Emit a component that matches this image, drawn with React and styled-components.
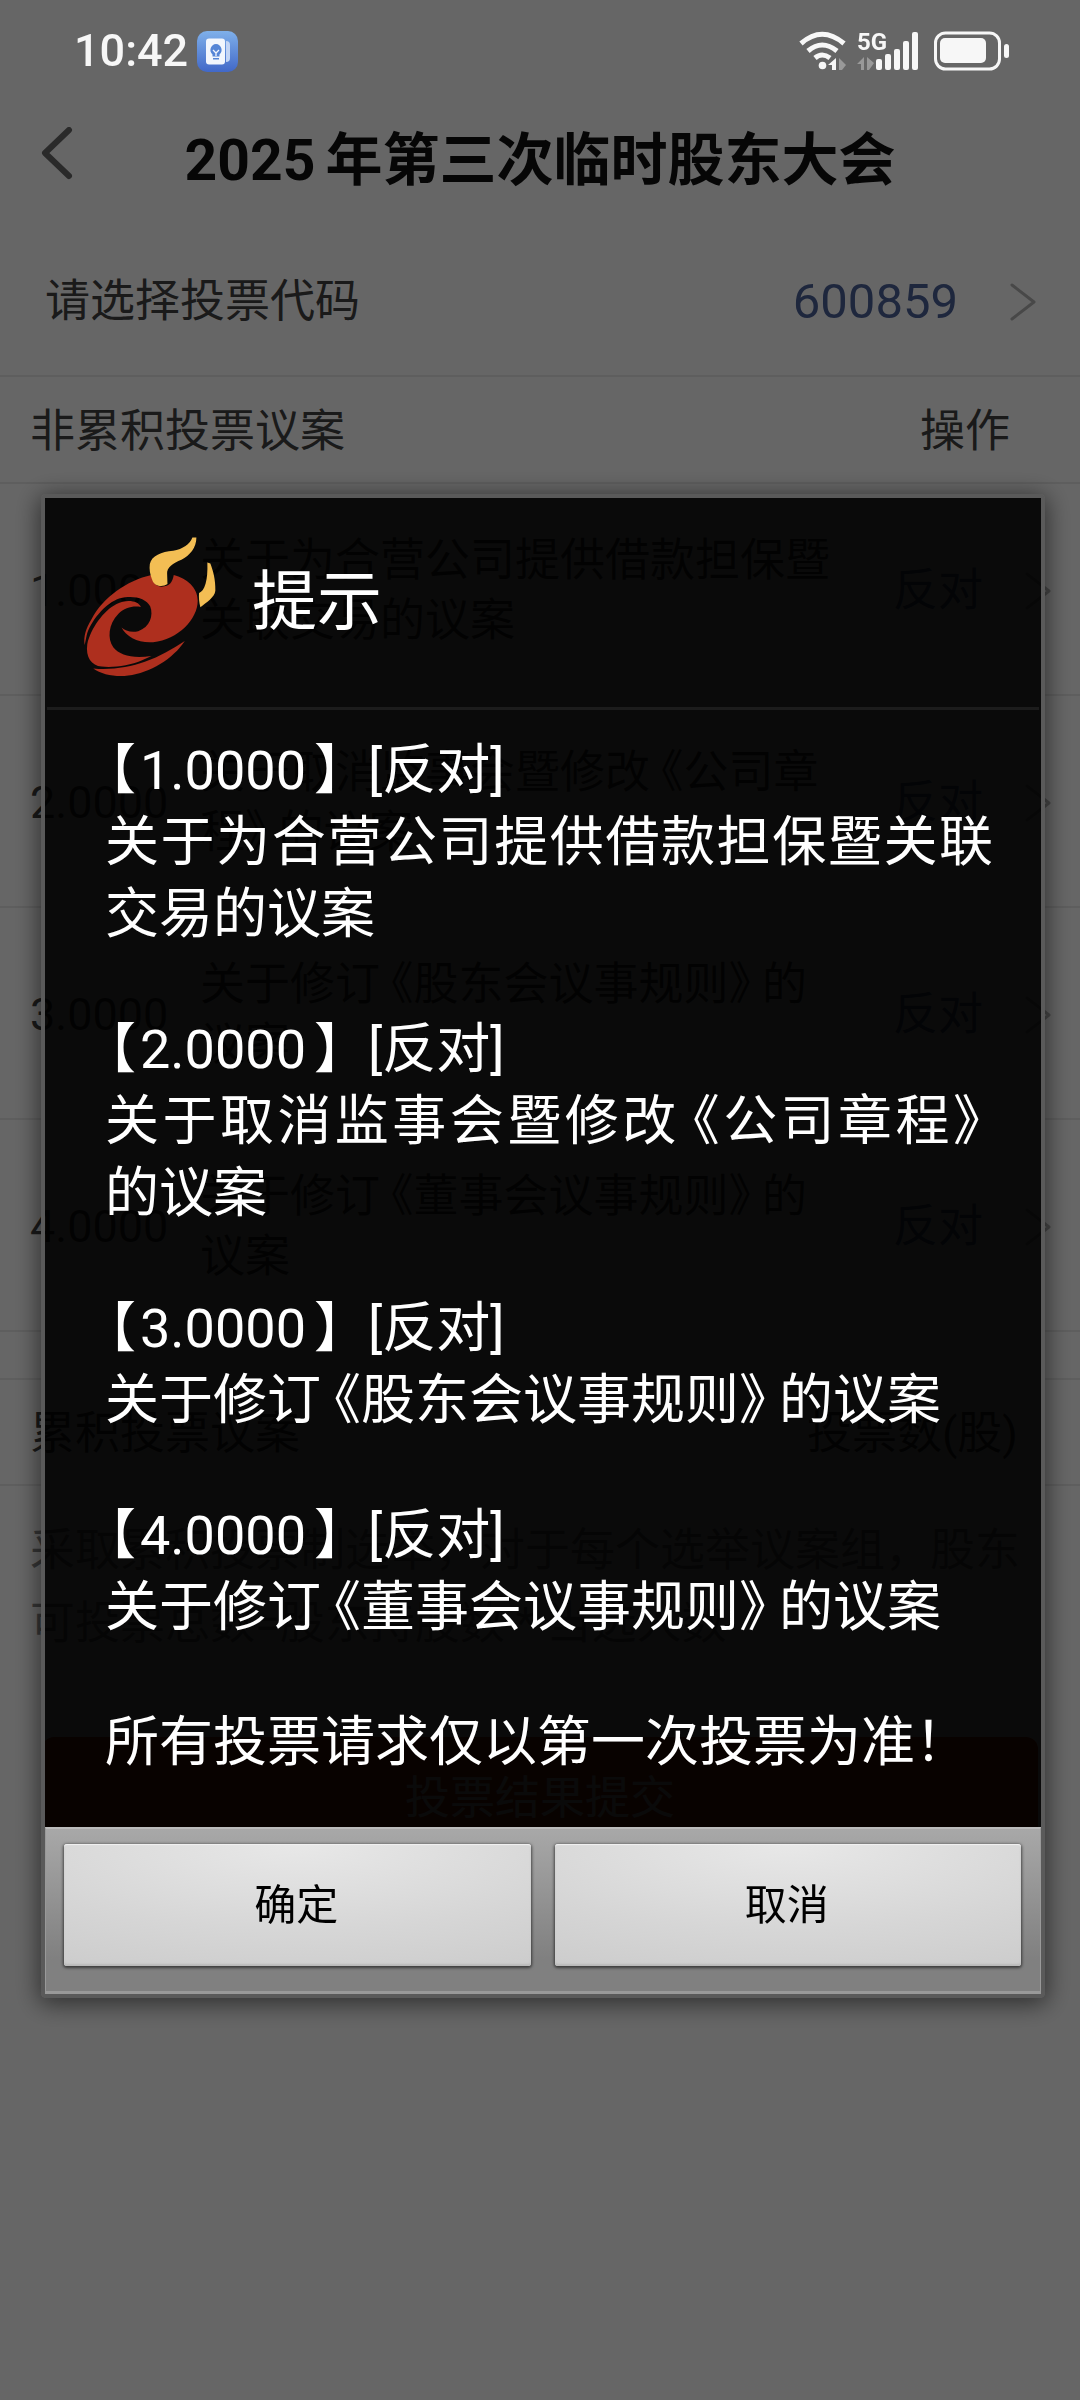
import React from 'react';
import styled, { createGlobalStyle } from 'styled-components';

const GlobalStyle = createGlobalStyle`
  * { box-sizing: border-box; }
  body {
    margin: 0;
    background: #fff;
    font-family: Roboto, "Noto Sans CJK SC", sans-serif;
    font-size: 45px;
    line-height: 60px;
    color: #424242;
  }
  button {
    font: inherit;
    color: inherit;
    border: 0;
    background: none;
    padding: 0;
  }
`;

const Screen = styled.div`
  min-height: 100vh;
  display: flex;
  flex-direction: column;
`;

const StatusBar = styled.header`
  position: relative;
  z-index: 2;
  height: 92px;
  padding: 10px 70px 0 74px;
  display: flex;
  align-items: center;
  justify-content: space-between;
  color: #f7f7f7;
`;

const StatusGroup = styled.div`
  display: flex;
  align-items: center;
  gap: ${(p) => p.$gap}px;
`;

const Clock = styled.time`
  font-size: 45px;
  font-weight: 500;
`;

const TitleBar = styled.div`
  height: 132px;
  padding: 6px 40px 0;
  display: grid;
  grid-template-columns: 36px 1fr 36px;
  align-items: center;
`;

const PageTitle = styled.h1`
  margin: 0;
  display: flex;
  justify-content: center;
  gap: 10px;
  font-size: 57px;
  line-height: 72px;
  font-weight: 700;
  color: #101010;
  white-space: nowrap;
`;

const CodeRow = styled.div`
  height: 153px;
  padding: 4px 44px 0 45px;
  display: flex;
  align-items: center;
  justify-content: space-between;
  border-bottom: 2px solid #ebebeb;
`;

const CodeButton = styled.button`
  display: flex;
  align-items: center;
  gap: 52px;
  font-size: 49px;
  color: #4d6299;
`;

const Table = styled.table`
  width: 100%;
  table-layout: fixed;
  border-spacing: 0;
  td, th {
    padding: 4px 0 0;
    border-bottom: 2px solid #ebebeb;
    font-weight: 400;
    text-align: left;
  }
`;

const HeadCell = styled.th`
  height: 107px;
  && { padding-left: ${(p) => p.$left || 0}px; }
`;

const NumberCell = styled.th`
  height: 212px;
  && { padding-left: 30px; }
`;

const VoteButton = styled.button`
  width: 100%;
  padding-right: 29px;
  display: flex;
  align-items: center;
  justify-content: flex-end;
  gap: 42px;
  color: #4d6299;
`;

const SectionHead = styled.div`
  height: 108px;
  margin-top: 46px;
  padding: 4px 62px 0 30px;
  display: flex;
  align-items: center;
  justify-content: space-between;
  border: solid #ebebeb;
  border-width: 2px 0;
`;

const Note = styled.p`
  margin: 0;
  padding: 28px 30px 77px;
  line-height: 73px;
  color: #888;
`;

const Submit = styled.button`
  && {
    height: 120px;
    margin: 0 42px;
    padding-top: 4px;
    border-radius: 12px;
    background: #c8360a;
    color: #fff;
  }
`;

const Overlay = styled.div`
  position: fixed;
  inset: 0;
  z-index: 1;
  padding: 92px 35px 0 41px;
  display: flex;
  align-items: center;
  background: rgba(0, 0, 0, 0.6);
`;

const Dialog = styled.section`
  flex: 1;
  border: 4px solid #5a5a5a;
  border-radius: 5px;
  box-shadow: 0 4px 24px 2px rgba(0, 0, 0, 0.55);
  color: #fff;
`;

const DialogMain = styled.div`
  background: rgba(0, 0, 0, 0.9);
`;

const DialogHead = styled.div`
  height: 212px;
  margin: 0 2px;
  padding: 8px 33px 0;
  display: flex;
  align-items: center;
  gap: 34px;
  border-bottom: 3px solid #1c1c1c;
`;

const DialogTitle = styled.h2`
  margin: 0 0 10px;
  font-size: 65px;
  line-height: 72px;
  font-weight: 400;
`;

const DialogBody = styled.div`
  padding: 25px 48px 48px 60px;
  display: flex;
  flex-direction: column;
  gap: 63px;
  font-size: 54px;
  line-height: 72px;
  text-align: justify;
  p { margin: 0; }
`;

const Bracket = styled.span`
  font-feature-settings: "halt";
  margin-left: ${(p) => p.$before || 0}px;
  margin-right: ${(p) => p.$after || 0}px;
`;

const DialogActions = styled.div`
  height: 167px;
  padding: 15px 19px 0 18px;
  display: grid;
  grid-template-columns: 1fr 1fr;
  align-items: start;
  gap: 24px;
  border: 1px solid #999;
  border-top: 2px solid #bbb;
  border-bottom: 3px solid #999;
  background: linear-gradient(#a8a8a8, #808080 80%);
`;

const ActionButton = styled.button`
  && {
    height: 122px;
    padding: 2px 2px 0 0;
    font-size: 42px;
    color: #000;
    border-radius: 3px;
    background: radial-gradient(ellipse 110% 130% at 50% 0%, #e8e8e8, #d6d6d6 55%, #c9c9c9);
    box-shadow: 0 1px 3px 1px rgba(0, 0, 0, 0.55), inset 0 1px 1px #f2f2f2, inset 0 -2px 2px #b9b9b9;
  }
`;

const NetworkLabel = styled.text`
  font-family: Roboto, sans-serif;
  font-size: 24px;
  font-weight: 700;
`;

const Chevron = () => (
  <svg width="26" height="38" viewBox="0 0 26 38" fill="none" stroke="#b4b4b4" strokeWidth="3" strokeLinecap="round" strokeLinejoin="round" aria-hidden="true">
    <path d="M2 2 L24 19 L2 36" />
  </svg>
);

const BackIcon = () => (
  <svg width="36" height="54" viewBox="0 0 36 54" fill="none" stroke="#6a6a6a" strokeWidth="6" strokeLinecap="round" strokeLinejoin="round" aria-hidden="true">
    <path d="M29 3 L5 26 L29 49" />
  </svg>
);

const TipsAppIcon = () => (
  <svg width="41" height="41" viewBox="0 0 41 41" aria-hidden="true">
    <defs>
      <linearGradient id="tips" x1="0" y1="0" x2="0" y2="1">
        <stop offset="0" stopColor="#7fb0ea" />
        <stop offset="1" stopColor="#4168c8" />
      </linearGradient>
    </defs>
    <rect width="41" height="41" rx="10" fill="url(#tips)" />
    <path d="M29 10 q4 0 4 4 v13 q0 4 -4 4z" fill="#c3d5f5" />
    <rect x="9" y="7.500" width="19" height="26" rx="3" fill="#f2f6fd" />
    <path d="M19 13 a6 6 0 0 1 3.500 10.500 v2 h-7 v-2 A6 6 0 0 1 19 13z M16 27 h6 v1.500 h-6z" fill="#5585d6" />
    <path d="M16 19 l3 3 3-3 M19 22 v3" stroke="#f2f6fd" strokeWidth="1.300" fill="none" />
  </svg>
);

const WifiIcon = () => (
  <svg width="47" height="40" viewBox="0 0 47 40" fill="none" stroke="#f7f7f7" strokeWidth="5" aria-hidden="true">
    <path d="M2 12.500 Q23 -6 45 12.500" />
    <path d="M9 20 Q23 8 38 20" />
    <path d="M16 27 Q23 21 31 27" />
    <circle cx="23.500" cy="34.500" r="3.800" fill="#f7f7f7" stroke="none" />
    <path d="M37 27 V39 H33 V34 H29z" fill="#f7f7f7" stroke="none" />
    <path d="M40 27 L47 34 L43 39 H40z" fill="#999" stroke="none" />
  </svg>
);

const SignalIcon = () => (
  <svg width="66" height="40" viewBox="0 0 66 40" fill="#f7f7f7" overflow="visible" aria-hidden="true">
    <NetworkLabel x="0" y="19">5G</NetworkLabel>
    <path d="M7 26 V39 H4 V33 H0z M10 26 L17 32 L12 39 H10z" fill="#999" />
    <rect x="19" y="28" width="6" height="11" rx="2" />
    <rect x="28" y="23" width="6" height="16" rx="2" />
    <rect x="37" y="18" width="6" height="21" rx="2" />
    <rect x="46" y="10" width="6" height="29" rx="2" />
    <rect x="55" y="1" width="6" height="38" rx="2" />
  </svg>
);

const BatteryIcon = () => (
  <svg width="76" height="40" viewBox="0 0 76 40" aria-hidden="true">
    <rect x="1.500" y="2" width="64" height="36" rx="10" fill="none" stroke="#f7f7f7" strokeWidth="3" />
    <rect x="6" y="7" width="46" height="25" rx="5" fill="#f7f7f7" />
    <rect x="70" y="13" width="5" height="14" rx="2.500" fill="#f7f7f7" />
  </svg>
);

const BullLogo = () => (
  <svg width="138" height="145" viewBox="30 45 415 435" role="img" aria-label="logo">
    <g fill="#ae2f1e">
      <path d="M245 168 C170 185 100 235 65 300 C48 328 40 352 44 378 L50 350 C60 310 105 252 150 238 C185 228 228 235 241 262 C252 290 240 325 205 337 C185 342 165 336 155 326 C170 355 205 373 250 370 C325 362 384 300 384 245 C384 205 350 178 312 168 C308 190 300 202 275 203 C255 202 247 185 245 168Z" />
      <path d="M213 264 C205 245 170 240 140 255 C100 275 62 330 52 375 C46 415 65 440 95 443 C130 447 180 440 215 425 L245 411 C190 420 150 410 130 385 C112 360 115 315 145 285 C165 265 190 260 213 264Z" />
      <path d="M345 366 C310 390 270 412 225 429 C180 445 120 455 70 449 C95 468 140 475 175 470 C240 462 310 420 345 366Z" />
    </g>
    <g fill="#f3be54">
      <path d="M240 135 C245 110 275 98 310 95 C340 90 360 75 368 55 L380 55 C380 85 360 110 335 122 C310 132 290 145 292 165 L293 195 C280 205 255 203 248 185 C240 165 238 150 240 135Z" />
      <path d="M413 130 L422 133 C430 155 438 180 437 215 C435 235 410 250 392 265 C388 250 387 235 388 222 C405 215 415 185 413 130Z" />
    </g>
  </svg>
);

const proposals = [
  { id: '1.0000', vote: '反对', title: '关于为合营公司提供借款担保暨关联交易的议案' },
  { id: '2.0000', vote: '反对', title: '关于取消监事会暨修改《公司章程》的议案' },
  { id: '3.0000', vote: '反对', title: '关于修订《股东会议事规则》的议案' },
  { id: '4.0000', vote: '反对', title: '关于修订《董事会议事规则》的议案' },
];

const TitleText = ({ text, space }) =>
  text.split(/([《》])/).map((part, i) => {
    if (part === '《') return <Bracket key={i} $before={space}>{part}</Bracket>;
    if (part === '》') return <Bracket key={i} $after={space}>{part}</Bracket>;
    return part;
  });

export default function App() {
  return (
    <Screen>
      <GlobalStyle />
      <StatusBar>
        <StatusGroup $gap={9}>
          <Clock>10:42</Clock>
          <TipsAppIcon />
        </StatusGroup>
        <StatusGroup $gap={11}>
          <WifiIcon />
          <SignalIcon />
          <BatteryIcon />
        </StatusGroup>
      </StatusBar>

      <TitleBar>
        <button type="button" aria-label="返回"><BackIcon /></button>
        <PageTitle><span>2025</span><span>年第三次临时股东大会</span></PageTitle>
      </TitleBar>

      <CodeRow>
        <span id="code-label">请选择投票代码</span>
        <CodeButton type="button" aria-describedby="code-label">600859<Chevron /></CodeButton>
      </CodeRow>

      <Table>
        <colgroup>
          <col style={{ width: 200 }} />
          <col />
          <col style={{ width: 238 }} />
        </colgroup>
        <thead>
          <tr>
            <HeadCell colSpan={2} $left={30}>非累积投票议案</HeadCell>
            <HeadCell $left={78}>操作</HeadCell>
          </tr>
        </thead>
        <tbody>
          {proposals.map((p) => (
            <tr key={p.id}>
              <NumberCell scope="row">{p.id}</NumberCell>
              <td><TitleText text={p.title} space={11} /></td>
              <td><VoteButton type="button">{p.vote}<Chevron /></VoteButton></td>
            </tr>
          ))}
        </tbody>
      </Table>

      <SectionHead>
        <span>累积投票议案</span>
        <span>投票数(股)</span>
      </SectionHead>
      <Note>采取累积投票制选举，对于每个选举议案组，股东可投票总数=股东持股数 * 当选人数</Note>
      <Submit type="button">投票结果提交</Submit>

      <Overlay>
        <Dialog role="dialog" aria-modal="true" aria-labelledby="dialog-title">
          <DialogMain>
            <DialogHead>
              <BullLogo />
              <DialogTitle id="dialog-title">提示</DialogTitle>
            </DialogHead>
            <DialogBody>
              {proposals.map((p) => (
                <p key={p.id}>
                  <Bracket $before={4} $after={4}>【</Bracket>{p.id}
                  <Bracket $before={8} $after={27}>】</Bracket>[{p.vote}]<br />
                  <TitleText text={p.title} space={13} />
                </p>
              ))}
              <p>所有投票请求仅以第一次投票为准！</p>
            </DialogBody>
          </DialogMain>
          <DialogActions>
            <ActionButton type="button">确定</ActionButton>
            <ActionButton type="button">取消</ActionButton>
          </DialogActions>
        </Dialog>
      </Overlay>
    </Screen>
  );
}
